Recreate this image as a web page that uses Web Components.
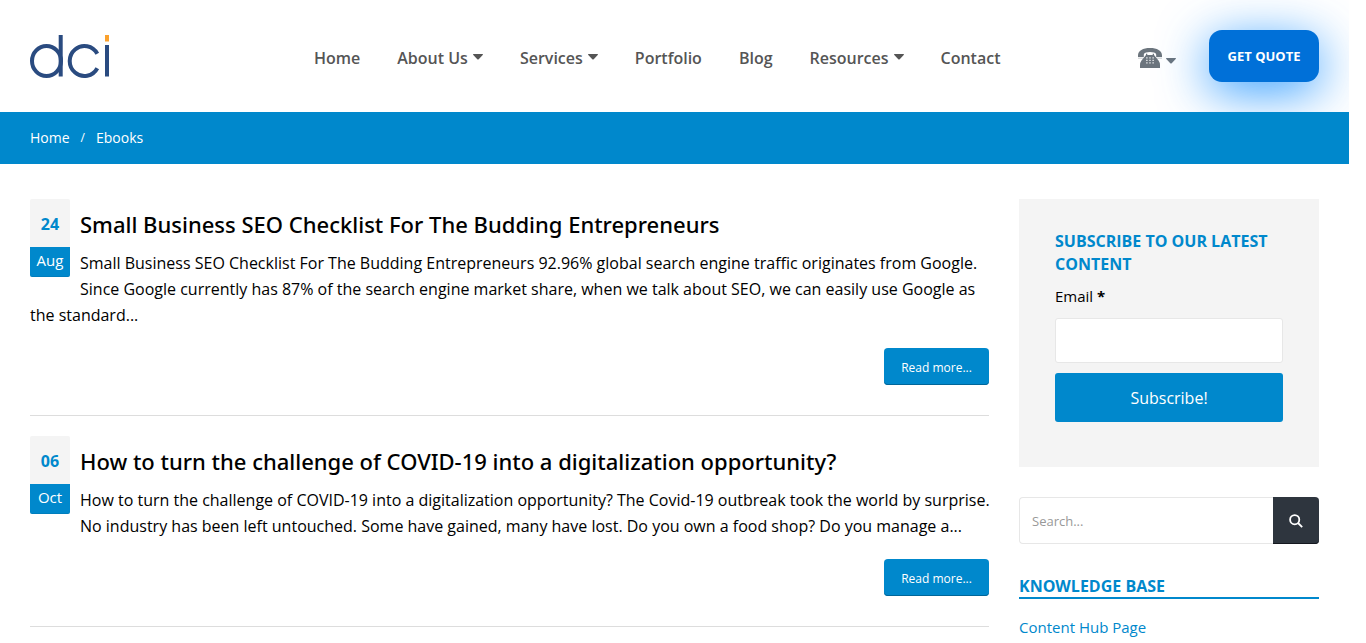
<!DOCTYPE html>
<html lang="en">
<head>
<meta charset="utf-8">
<meta name="viewport" content="width=device-width, initial-scale=1">
<title>Ebooks</title>
<style>
  html { background: #fff; }
  body {
    margin: 0;
    padding-right: 17px;
    font: 16px/26px "Open Sans", "Noto Sans", sans-serif;
    color: #000;
    --brand: #0088cc;
    --soft: #f4f4f4;
  }
</style>
</head>
<body>
<dci-page></dci-page>

<script>
const define = (name, html, setup) => {
  const template = document.createElement('template');
  template.innerHTML = `<style>*{box-sizing:border-box} a{color:inherit;text-decoration:none}</style>${html}`;
  customElements.define(name, class extends HTMLElement {
    connectedCallback() {
      if (this.shadowRoot) return;
      this.attachShadow({ mode: 'open' }).append(template.content.cloneNode(true));
      if (setup) setup(this, this.shadowRoot);
    }
  });
};

define('dci-logo', `
  <style>
    :host { display: block; width: 80px; padding-top: 2px; }
    svg { display: block; }
  </style>
  <a href="#" aria-label="dci">
    <svg width="80" height="44" viewBox="0 0 80 44" fill="none" stroke="#2a4b80" stroke-width="4">
      <ellipse cx="16.5" cy="26" rx="14.5" ry="15"/>
      <path d="M30.7 0V41.5M77 10V41.5"/>
      <path d="M67.3 18.8A14.7 15 0 1 0 67.3 33.2"/>
      <path d="M77 0V6.500" stroke="#fba12d"/>
    </svg>
  </a>`);

define('dci-caret', `
  <style>
    :host { display: block; width: 10px; height: 6px; }
    svg { display: block; }
  </style>
  <svg width="10" height="6" viewBox="0 0 10 6" fill="currentColor"><path d="M.6 0H9.4Q10.4 .3 9.700 1.100L5.700 5.200Q5 5.800 4.300 5.200L.3 1.100Q-.4 .3 .6 0Z"/></svg>`);

define('dci-nav-item', `
  <style>
    :host { display: block; }
    a { display: flex; gap: 5px; font-weight: 600; color: #555; white-space: nowrap; }
    dci-caret { margin-top: 9px; }
  </style>
  <a href="#"><slot></slot></a>`,
  (host, root) => {
    if (host.hasAttribute('menu')) root.querySelector('a').append(document.createElement('dci-caret'));
  });

define('dci-phone', `
  <style>
    :host { display: block; padding-top: 4px; }
    button { display: flex; gap: 4px; padding: 0; border: 0; background: none; color: #6c757d; }
    dci-caret { margin-top: 10px; }
  </style>
  <button type="button" aria-label="Call us">
    <svg width="24" height="20" viewBox="0 0 24 20" fill="currentColor">
      <path d="M0 9V7.500C0 2.500 5 0 12 0S24 2.500 24 7.500V9H18.200V6.600Q18 4.800 16 4.400Q12 3.700 8 4.400Q6 4.800 5.800 6.600V9Z"/>
      <path fill-rule="evenodd" d="M8 5.800H9.300V7H14.700V5.800H16V7L20.500 12.500Q22 14.500 22 17V20H2V17Q2 14.500 3.500 12.500L8 7ZM8.300 9.300V10.500H9.500V9.300ZM11.400 9.300V10.500H12.600V9.300ZM14.500 9.300V10.500H15.700V9.300ZM8.300 11.800V13H9.500V11.800ZM11.400 11.800V13H12.600V11.800ZM14.500 11.800V13H15.700V11.800ZM8.300 14.300V15.500H9.500V14.300ZM11.400 14.300V15.500H12.600V14.300ZM14.500 14.300V15.500H15.700V14.300Z"/>
      <path d="M0 9.700H5.800V10.400H0ZM18.200 9.700H24V10.400H18.200Z" opacity=".5"/>
    </svg>
    <dci-caret></dci-caret>
  </button>`);

define('dci-header', `
  <style>
    :host { display: flex; align-items: center; padding: 30px; }
    nav { display: flex; gap: 37px; margin-left: 204px; padding-top: 3px; }
    .actions { display: flex; align-items: center; gap: 33px; margin-left: auto; }
    .quote {
      width: 110px; height: 52px; padding: 0; border: 0; border-radius: 13px;
      background: #0070d8; color: #fff; font: 700 13px/20px "Open Sans", sans-serif;
      box-shadow: 0 10px 50px rgba(0, 132, 255, .8);
    }
  </style>
  <dci-logo></dci-logo>
  <nav>
    <dci-nav-item>Home</dci-nav-item>
    <dci-nav-item menu>About Us</dci-nav-item>
    <dci-nav-item menu>Services</dci-nav-item>
    <dci-nav-item>Portfolio</dci-nav-item>
    <dci-nav-item>Blog</dci-nav-item>
    <dci-nav-item menu>Resources</dci-nav-item>
    <dci-nav-item>Contact</dci-nav-item>
  </nav>
  <div class="actions">
    <dci-phone></dci-phone>
    <button class="quote" type="button">GET QUOTE</button>
  </div>`);

define('dci-breadcrumb', `
  <style>
    :host { display: block; position: relative; background: var(--brand); color: #fff; }
    ol { display: flex; gap: 11px; margin: 0; padding: 13px 30px; list-style: none; font-size: 14px; }
    li { display: flex; gap: 11px; }
    li + li::before { content: "/"; font-size: 12px; }
  </style>
  <nav aria-label="Breadcrumb"><ol><li><a href="#">Home</a></li><li>Ebooks</li></ol></nav>`);

define('dci-date', `
  <style>
    :host { display: block; width: 40px; text-align: center; }
    .day { display: block; padding: 12px 0 10px; border-radius: 2px 2px 0 0; background: var(--soft); color: var(--brand); font-weight: 700; }
    .month { display: block; padding-bottom: 4px; border-radius: 0 0 2px 2px; background: var(--brand); color: #fff; font-size: 15px; box-shadow: inset 0 -1px 0 rgba(0, 0, 0, .07); }
  </style>
  <span class="day"><slot name="day"></slot></span>
  <span class="month"><slot name="month"></slot></span>`);

define('dci-post', `
  <style>
    :host { display: flow-root; padding-bottom: 30px; border-bottom: 1px solid #ddd; }
    dci-date { float: left; margin-right: 10px; }
    h2 { margin: 0; padding: 8px 0 9px; font: 500 22px/34px "Noto Sans", sans-serif; }
    p { margin: 0 -8px 20px 0; }
    .more { display: flex; justify-content: flex-end; }
    .more a {
      padding: 7px 0 4px; width: 105px; border-radius: 4px; text-align: center;
      background: var(--brand); color: #fff; font-size: 12px;
      box-shadow: inset 0 -1px 0 #006699;
    }
  </style>
  <article>
    <dci-date><slot name="day" slot="day"></slot><slot name="month" slot="month"></slot></dci-date>
    <h2><a href="#"><slot name="title"></slot></a></h2>
    <p><slot></slot></p>
    <div class="more"><a href="#">Read more...</a></div>
  </article>`);

define('dci-subscribe', `
  <style>
    :host { display: block; padding: 31px 36px 45px; background: var(--soft); }
    h3 { margin: 0 0 7px; font-size: 16px; line-height: 23px; font-weight: 700; color: var(--brand); }
    label { display: block; margin-bottom: 9px; font-size: 15px; }
    input { display: block; width: 100%; height: 45px; margin-bottom: 10px; padding: 0 12px; border: 1px solid #e7e7e7; border-radius: 3px; background: #fff; font: inherit; }
    button { display: block; width: 100%; height: 49px; padding: 0; border: 0; border-radius: 3px; background: var(--brand); color: #fff; font: inherit; }
  </style>
  <form>
    <h3>SUBSCRIBE TO OUR LATEST CONTENT</h3>
    <label for="email">Email <b>*</b></label>
    <input id="email" type="email">
    <button type="button">Subscribe!</button>
  </form>`);

define('dci-search', `
  <style>
    :host { display: block; }
    form { display: flex; height: 47px; }
    input { flex: 1; min-width: 0; padding: 1px 12px 0; border: 1px solid #e7e7e7; border-right: 0; border-radius: 4px 0 0 4px; background: #fff; font: 13px/20px "Open Sans", sans-serif; }
    input::placeholder { color: #999; }
    button { display: flex; align-items: center; justify-content: center; width: 46px; padding: 0; border: 0; border-radius: 0 4px 4px 0; background: #2e353e; box-shadow: inset 0 -1px 0 #15181f; }
  </style>
  <form role="search">
    <input type="search" aria-label="Search" placeholder="Search...">
    <button type="button" aria-label="Search">
      <svg width="14" height="14" viewBox="0 0 14 14" fill="none" stroke="#fff" stroke-width="1.800"><circle cx="5.700" cy="5.700" r="4.600"/><path d="M9 9L13.200 13.200"/></svg>
    </button>
  </form>`);

define('dci-links', `
  <style>
    :host { display: block; color: var(--brand); }
    h3 { margin: 0; padding-top: 2px; border-bottom: 2px solid; font-size: 16px; line-height: 21px; font-weight: 700; }
    ul { margin: 15px 0 0; padding: 0; list-style: none; font-size: 15px; }
  </style>
  <h3>KNOWLEDGE BASE</h3>
  <ul><li><a href="#">Content Hub Page</a></li></ul>`);

define('dci-page', `
  <style>
    :host { display: block; overflow: hidden; }
    .content { display: grid; grid-template-columns: minmax(0, 1fr) 300px; gap: 30px; padding: 35px 30px 0; }
    main { display: grid; gap: 20px; align-content: start; }
    aside { display: grid; gap: 30px; align-content: start; }
  </style>
  <dci-header></dci-header>
  <dci-breadcrumb></dci-breadcrumb>
  <div class="content">
    <main>
      <dci-post>
        <span slot="day">24</span><span slot="month">Aug</span>
        <span slot="title">Small Business SEO Checklist For The Budding Entrepreneurs</span>
        Small Business SEO Checklist For The Budding Entrepreneurs 92.96% global search engine traffic originates from Google. Since Google currently has 87% of the search engine market share, when we talk about SEO, we can easily use Google as the standard...
      </dci-post>
      <dci-post>
        <span slot="day">06</span><span slot="month">Oct</span>
        <span slot="title">How to turn the challenge of COVID-19 into a digitalization opportunity?</span>
        How to turn the challenge of COVID-19 into a digitalization opportunity? The Covid-19 outbreak took the world by surprise. No industry has been left untouched. Some have gained, many have lost. Do you own a food shop? Do you manage a...
      </dci-post>
    </main>
    <aside>
      <dci-subscribe></dci-subscribe>
      <dci-search></dci-search>
      <dci-links></dci-links>
    </aside>
  </div>`);
</script>
</body>
</html>
